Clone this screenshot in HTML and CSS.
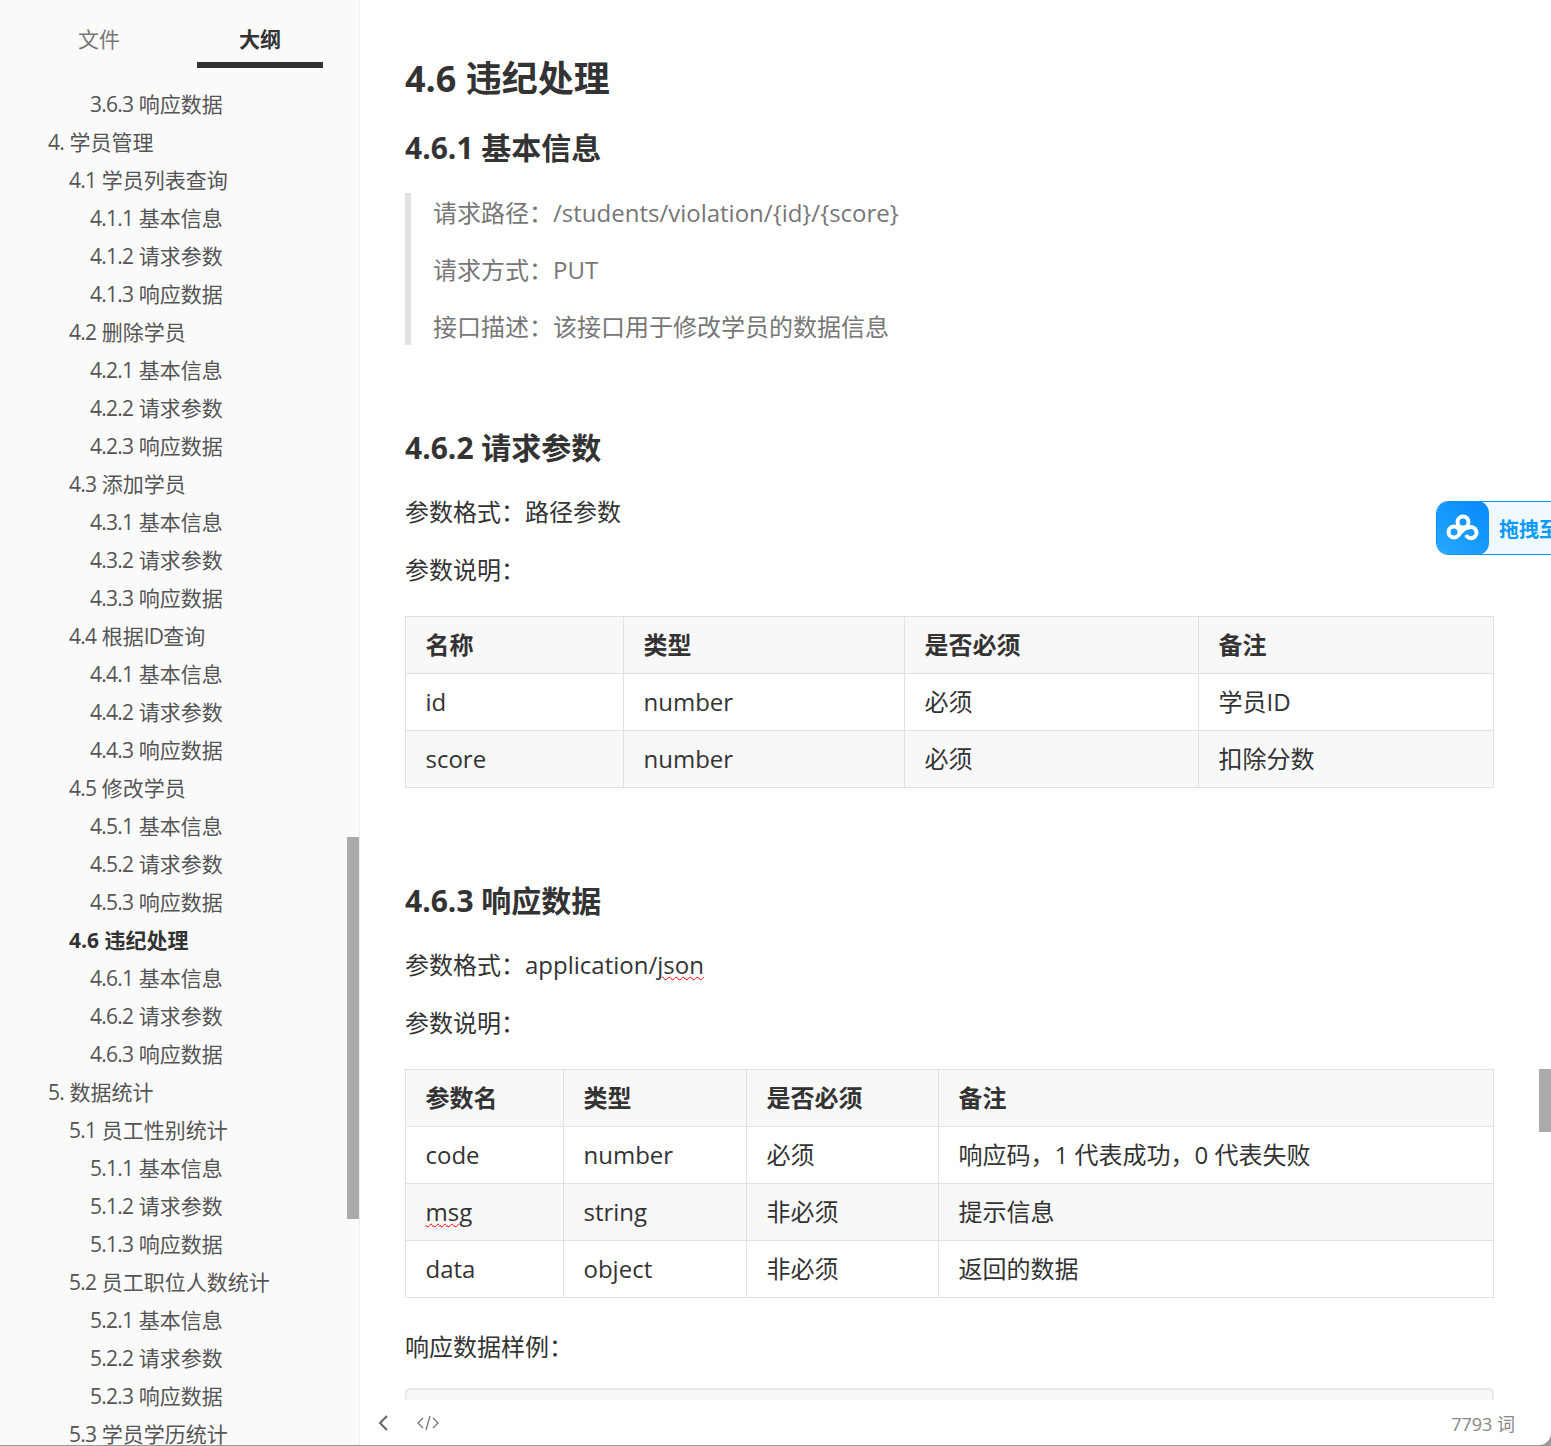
FILE: index.html
```html
<!DOCTYPE html>
<html lang="zh-CN">
<head>
    <meta charset="UTF-8">
    <meta name="viewport" content="width=device-width, initial-scale=1.0">
    <title>4.6 违纪处理</title>
    <link rel="stylesheet" href="styles.css">
</head>
<body>
    <div class="window">
        <aside class="sidebar">
            <div class="tabs">
                <div class="tab">文件</div>
                <div class="tab active">大纲</div>
            </div>
            <ul class="outline">
                <li class="lv3"><span class="num">3.6.3</span> 响应数据</li>
                <li class="lv1"><span class="num">4.</span> 学员管理</li>
                <li class="lv2"><span class="num">4.1</span> 学员列表查询</li>
                <li class="lv3"><span class="num">4.1.1</span> 基本信息</li>
                <li class="lv3"><span class="num">4.1.2</span> 请求参数</li>
                <li class="lv3"><span class="num">4.1.3</span> 响应数据</li>
                <li class="lv2"><span class="num">4.2</span> 删除学员</li>
                <li class="lv3"><span class="num">4.2.1</span> 基本信息</li>
                <li class="lv3"><span class="num">4.2.2</span> 请求参数</li>
                <li class="lv3"><span class="num">4.2.3</span> 响应数据</li>
                <li class="lv2"><span class="num">4.3</span> 添加学员</li>
                <li class="lv3"><span class="num">4.3.1</span> 基本信息</li>
                <li class="lv3"><span class="num">4.3.2</span> 请求参数</li>
                <li class="lv3"><span class="num">4.3.3</span> 响应数据</li>
                <li class="lv2"><span class="num">4.4</span> 根据<span class="num">ID</span>查询</li>
                <li class="lv3"><span class="num">4.4.1</span> 基本信息</li>
                <li class="lv3"><span class="num">4.4.2</span> 请求参数</li>
                <li class="lv3"><span class="num">4.4.3</span> 响应数据</li>
                <li class="lv2"><span class="num">4.5</span> 修改学员</li>
                <li class="lv3"><span class="num">4.5.1</span> 基本信息</li>
                <li class="lv3"><span class="num">4.5.2</span> 请求参数</li>
                <li class="lv3"><span class="num">4.5.3</span> 响应数据</li>
                <li class="lv2 current">4.6 违纪处理</li>
                <li class="lv3"><span class="num">4.6.1</span> 基本信息</li>
                <li class="lv3"><span class="num">4.6.2</span> 请求参数</li>
                <li class="lv3"><span class="num">4.6.3</span> 响应数据</li>
                <li class="lv1"><span class="num">5.</span> 数据统计</li>
                <li class="lv2"><span class="num">5.1</span> 员工性别统计</li>
                <li class="lv3"><span class="num">5.1.1</span> 基本信息</li>
                <li class="lv3"><span class="num">5.1.2</span> 请求参数</li>
                <li class="lv3"><span class="num">5.1.3</span> 响应数据</li>
                <li class="lv2"><span class="num">5.2</span> 员工职位人数统计</li>
                <li class="lv3"><span class="num">5.2.1</span> 基本信息</li>
                <li class="lv3"><span class="num">5.2.2</span> 请求参数</li>
                <li class="lv3"><span class="num">5.2.3</span> 响应数据</li>
                <li class="lv2"><span class="num">5.3</span> 学员学历统计</li>
            </ul>
            <div class="side-thumb"></div>
        </aside>
        <main class="main">
            <div class="doc">
                <h1>4.6 违纪处理</h1>
                <h2>4.6.1 基本信息</h2>
                <blockquote>
                    <p>请求路径：/students/violation/{id}/{score}</p>
                    <p>请求方式：PUT</p>
                    <p>接口描述：该接口用于修改学员的数据信息</p>
                </blockquote>
                <h2 class="spaced">4.6.2 请求参数</h2>
                <p>参数格式：路径参数</p>
                <p>参数说明：</p>
                <table class="table-a">
                    <thead>
                        <tr><th>名称</th><th>类型</th><th>是否必须</th><th>备注</th></tr>
                    </thead>
                    <tbody>
                        <tr><td>id</td><td>number</td><td>必须</td><td>学员ID</td></tr>
                        <tr><td>score</td><td>number</td><td>必须</td><td>扣除分数</td></tr>
                    </tbody>
                </table>
                <h2 class="spaced">4.6.3 响应数据</h2>
                <p>参数格式：application/<span class="typo">json</span></p>
                <p>参数说明：</p>
                <table class="table-b">
                    <thead>
                        <tr><th>参数名</th><th>类型</th><th>是否必须</th><th>备注</th></tr>
                    </thead>
                    <tbody>
                        <tr><td>code</td><td>number</td><td>必须</td><td>响应码，1 代表成功，0 代表失败</td></tr>
                        <tr><td><span class="typo">msg</span></td><td>string</td><td>非必须</td><td>提示信息</td></tr>
                        <tr><td>data</td><td>object</td><td>非必须</td><td>返回的数据</td></tr>
                    </tbody>
                </table>
                <p class="sample">响应数据样例：</p>
                <div class="code-block"></div>
            </div>
            <footer class="statusbar">
                <svg class="icon-back" width="12" height="18" viewBox="0 0 12 18"><path d="M10 2 3 9l7 7" fill="none" stroke="#666" stroke-width="2"/></svg>
                <svg class="icon-code" width="24" height="18" viewBox="0 0 24 18"><path d="M7 4 2 9l5 5M17 4l5 5-5 5M14 2l-4 14" fill="none" stroke="#777" stroke-width="1.3"/></svg>
                <span class="words">7793 词</span>
            </footer>
            <div class="main-thumb"></div>
            <div class="drag-badge">
                <div class="drag-icon">
                    <svg width="34" height="30" viewBox="0 0 34 30"><g fill="none" stroke="#fff" stroke-width="4"><circle cx="17" cy="9" r="5.5"/><circle cx="8" cy="19" r="5.5"/><path d="M13 21C16 19 18 14 23 14.500A5.500 5.500 0 1 1 20 22"/></g></svg>
                </div>
                <span class="drag-text">拖拽至此处</span>
            </div>
        </main>
    </div>
</body>
</html>
```

FILE: styles.css
```css
*{
    box-sizing: border-box;
}
html,body{
    margin: 0;
    height: 100%;
}
body{
    background: #9a9a9a;
    font-family: "Open Sans", "Noto Sans CJK SC", sans-serif;
    color: #333;
    overflow: hidden;
}
.window{
    display: flex;
    height: 1445px;
    background: #fff;
    border-bottom-right-radius: 12px;
    overflow: hidden;
}

/* sidebar */
.sidebar{
    position: relative;
    flex: 0 0 360px;
    background: #fafafa;
    border-right: 1px solid #eee;
    overflow: hidden;
}
.tabs{
    display: flex;
    gap: 35px;
    height: 68px;
    padding: 0 36px;
}
.tab{
    flex: 0 0 126px;
    font-size: 21px;
    line-height: 78px;
    text-align: center;
    color: #777;
    height: 68px;
}
.tab.active{
    color: #333;
    font-weight: 700;
    border-bottom: 6px solid #333;
}
.outline{
    list-style: none;
    margin: 0;
    padding: 17px 0 0;
    font-size: 21px;
    line-height: 38px;
    color: #555;
    white-space: nowrap;
}
.num{
    letter-spacing: -0.75px;
}
.lv1{
    padding-left: 48px;
}
.lv2{
    padding-left: 69px;
}
.lv3{
    padding-left: 90px;
}
.outline .current{
    font-weight: 700;
    color: #333;
}
.side-thumb{
    position: absolute;
    right: 0;
    top: 837px;
    width: 12px;
    height: 382px;
    background: #aaa;
}

/* document */
.main{
    position: relative;
    flex: 1;
    min-width: 0;
    overflow: hidden;
}
.doc{
    height: 1400px;
    overflow: hidden;
    padding: 51px 57px 0 45px;
}
h1{
    margin: 0;
    font-size: 36px;
    line-height: 56px;
    font-weight: 700;
}
h2{
    margin: 17px 0 0;
    font-size: 30px;
    line-height: 48px;
    font-weight: 700;
}
h2.spaced{
    margin-top: 89px;
}
blockquote + h2.spaced{
    margin-top: 79px;
}
p{
    margin: 0;
    font-size: 24px;
    line-height: 36px;
    padding: 0;
}
.doc > p{
    margin-top: 22px;
}
blockquote{
    margin: 21px 0 0;
    padding: 2px 0 0 22px;
    border-left: 6px solid #dfe2e5;
    color: #777;
}
blockquote p{
    margin-bottom: 21px;
}
blockquote p:last-child{
    margin-bottom: 0;
}
table{
    width: 1089px;
    margin-top: 28px;
    border-collapse: collapse;
    table-layout: fixed;
    font-size: 24px;
}
th,td{
    height: 57px;
    padding: 0 20px 0 19.5px;
    border: 1px solid #dfe2e5;
    text-align: left;
    font-weight: 400;
    line-height: 36px;
}
th{
    font-weight: 700;
}
thead tr,
tbody tr:nth-child(2n){
    background: #f8f8f8;
}
.table-a th:nth-child(1){
    width: 218px;
}
.table-a th:nth-child(2){
    width: 281px;
}
.table-a th:nth-child(3){
    width: 294px;
}
.table-b th:nth-child(1){
    width: 158px;
}
.table-b th:nth-child(2){
    width: 183px;
}
.table-b th:nth-child(3){
    width: 192px;
}
.typo{
    text-decoration: underline wavy #f00;
    text-decoration-thickness: 1px;
    text-underline-offset: 2px;
}
.doc > p.sample{
    margin-top: 31px;
}
.code-block{
    height: 40px;
    margin-top: 23px;
    background: #f8f8f8;
    border: 2px solid #e7eaed;
    border-radius: 5px;
    width: 1089px;
}

/* bottom bar */
.statusbar{
    display: flex;
    align-items: center;
    height: 45px;
    padding: 0 36px 0 17px;
    color: #888;
    font-size: 18px;
}
.icon-code{
    margin-left: 27px;
}
.words{
    margin-left: auto;
}
.main-thumb{
    position: absolute;
    right: 0;
    top: 1069px;
    width: 12px;
    height: 63px;
    background: #aaa;
}
.drag-badge{
    position: absolute;
    left: 1076px;
    top: 501px;
    display: flex;
    align-items: center;
    width: 150px;
    height: 54px;
    background: #f0f8ff;
    border: 1px solid #0a93f5;
    border-radius: 12px;
    overflow: hidden;
}
.drag-icon{
    flex: 0 0 53px;
    height: 54px;
    margin: -1px 0 0 -1px;
    display: flex;
    align-items: center;
    justify-content: center;
    background: linear-gradient(35deg, #2aa9ff, #0389fb);
    border-radius: 12px;
}
.drag-text{
    margin-left: 10px;
    color: #0a9bf8;
    font-size: 20px;
    font-weight: 700;
    white-space: nowrap;
}
```
